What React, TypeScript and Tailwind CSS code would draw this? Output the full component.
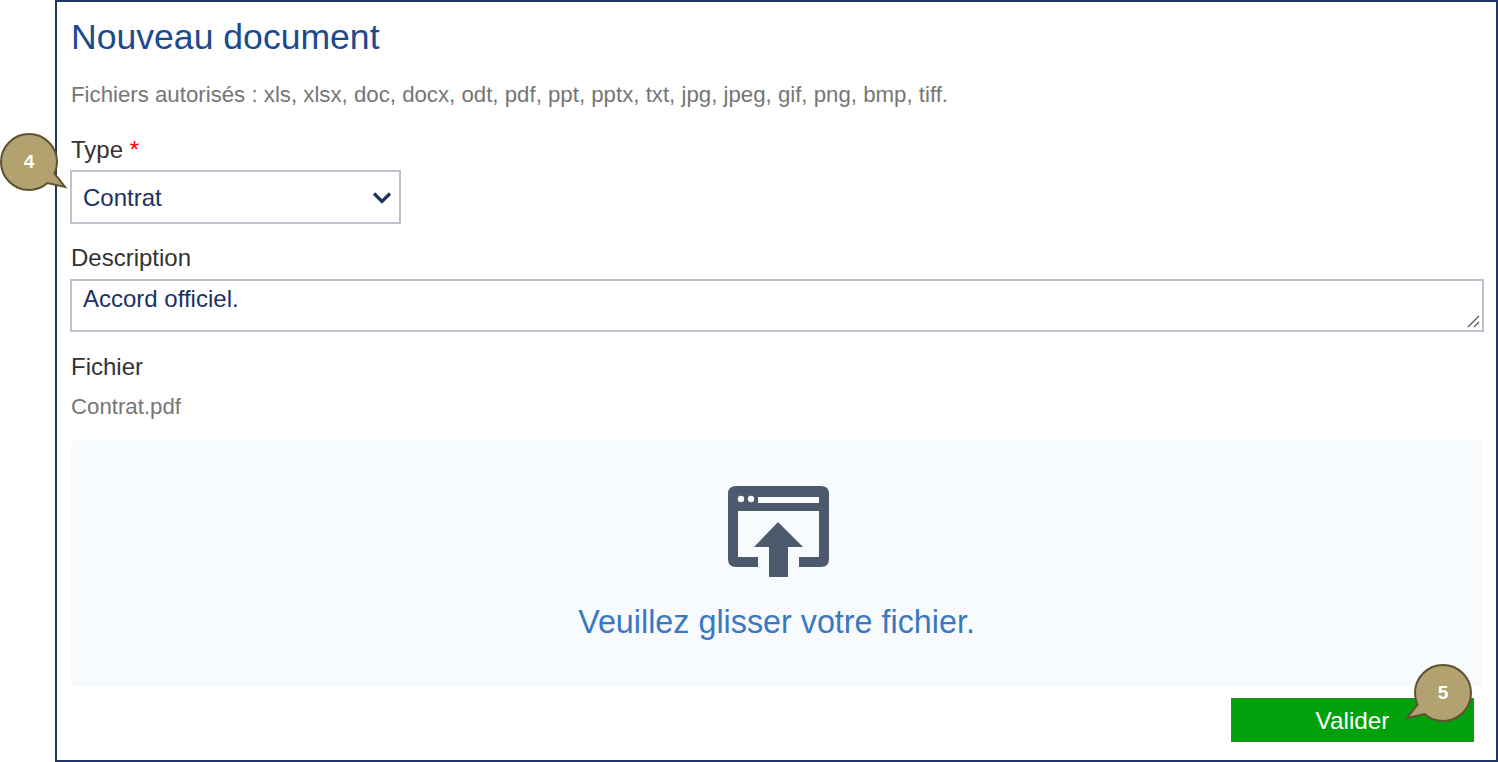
import React from 'react';

const font = "font-['Liberation_Sans',Arial,sans-serif]";

const Bubble: React.FC<{ label: string; tail: 'right' | 'left'; className: string }> = ({ label, tail, className }) => (
    <div className={`absolute w-[70px] h-[64px] ${className}`}>
        <svg width="70" height="64" viewBox="0 0 70 64" className="absolute left-0 top-0">
            {tail === 'right' ? (
                <path d="M29 1 C44.5 1 57 13.5 57 29 C57 33 56 37 54.5 40.5 L65 54 L47.5 50 C42.5 54.5 36 57 29 57 C13.5 57 1 44.5 1 29 C1 13.5 13.5 1 29 1 Z" fill="#b2a26f" stroke="#5f5233" strokeWidth="2" />
            ) : (
                <path d="M41 1 C25.5 1 13 13.5 13 29 C13 33 14 37 15.5 40.5 L5 54 L22.5 50 C27.5 54.5 34 57 41 57 C56.5 57 69 44.5 69 29 C69 13.5 56.5 1 41 1 Z" fill="#b2a26f" stroke="#5f5233" strokeWidth="2" />
            )}
        </svg>
        <span className={`absolute top-[18px] ${tail === 'right' ? 'left-0 w-[58px]' : 'left-[12px] w-[58px]'} text-center text-[19px] leading-[22px] font-bold text-white`}>{label}</span>
    </div>
);

const UploadIcon = () => (
    <svg width="103" height="92" viewBox="0 0 103 92" className="ml-[3px] blur-[0.4px]">
        <path d="M9 0 H94 Q102 0 102 8 V73 Q102 81 94 81 H72 V71 H92 V25 H11 V71 H31 V81 H9 Q1 81 1 73 V8 Q1 0 9 0 Z" fill="#4d5a6e" />
        <circle cx="14" cy="13" r="3.2" fill="#f8fbfe" />
        <circle cx="24" cy="13" r="3.2" fill="#f8fbfe" />
        <rect x="31" y="11" width="61" height="6" fill="#f8fbfe" />
        <path d="M51 36 L76 61 H61 V91 H42 V61 H27 Z" fill="#4d5a6e" />
    </svg>
);

const App: React.FC = () => {
    return (
        <div className={`relative w-[1498px] h-[762px] bg-white overflow-hidden ${font}`}>
            <div className="ml-[55px] w-[1443px] h-[762px] border-2 border-[#1f3566] pl-[13px] pr-[13px] pt-[13px]">
                <h1 className="ml-[1px] text-[35.6px] leading-[44px] font-normal text-[#1c4a8f]">Nouveau document</h1>
                <p className="ml-[1px] mt-[22px] text-[22.24px] leading-[28px] text-[#767676]">Fichiers autorisés : xls, xlsx, doc, docx, odt, pdf, ppt, pptx, txt, jpg, jpeg, gif, png, bmp, tiff.</p>

                <label className="block ml-[1px] mt-[27px] text-[24px] leading-[28px] text-[#333333]">Type <span className="text-[#ff0000]">*</span></label>
                <div className="mt-[6px] w-[331px] h-[54px] border-2 border-[#bcc2cf] flex items-center justify-between pl-[11px] pr-[7px] pt-[1px]">
                    <span className="text-[24px] text-[#1b3263]">Contrat</span>
                    <svg width="20" height="14" viewBox="0 0 20 14"><path d="M2 2.5 L10 10.5 L18 2.5" fill="none" stroke="#1b3263" strokeWidth="3.2" /></svg>
                </div>

                <label className="block ml-[1px] mt-[20px] text-[24px] leading-[28px] text-[#333333]">Description</label>
                <div className="relative mt-[7px] w-[1414px] h-[53px] border-2 border-[#bcc2cf] pl-[11px]">
                    <span className="block text-[24px] leading-[32px] text-[#1b3263] mt-[2px]">Accord officiel.</span>
                    <svg width="14" height="14" viewBox="0 0 14 14" className="absolute right-[1px] bottom-[1px]">
                        <path d="M1 12 L12 1 M7 12 L12 7" stroke="#555555" strokeWidth="1.2" fill="none" />
                    </svg>
                </div>

                <label className="block ml-[1px] mt-[21px] text-[24px] leading-[28px] text-[#333333]">Fichier</label>
                <p className="ml-[1px] mt-[12px] text-[22.24px] leading-[28px] text-[#767676]">Contrat.pdf</p>

                <div className="ml-[1px] mt-[20px] w-[1411px] h-[245px] bg-[#f8fbfe] flex flex-col items-center pt-[45px]">
                    <UploadIcon />
                    <p className="mt-[24px] text-[32.3px] leading-[40px] text-[#3a78c2]">Veuillez glisser votre fichier.</p>
                </div>

                <div className="flex justify-end mt-[12px] pr-[9px]">
                    <button className="w-[243px] h-[44px] bg-[#00a10b] border border-[#2a8a2f] pt-[2px] text-white text-[24.3px]">Valider</button>
                </div>
            </div>
            <Bubble label="4" tail="right" className="left-0 top-[133px]" />
            <Bubble label="5" tail="left" className="left-[1402px] top-[664px]" />
        </div>
    );
};

export default App;
